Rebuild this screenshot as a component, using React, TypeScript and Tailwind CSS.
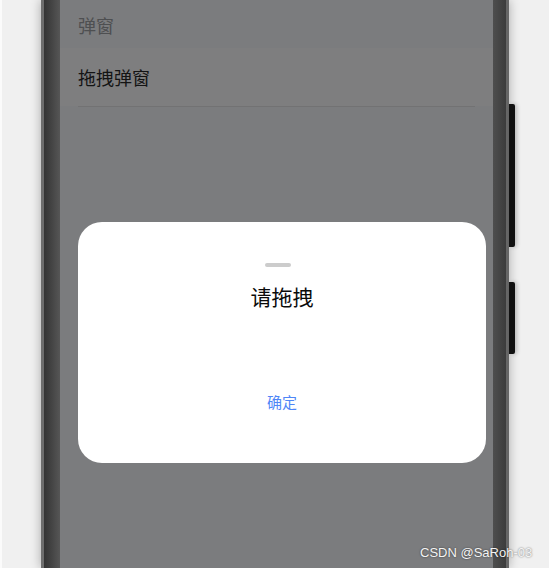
export default function App() {
  return (
    <div
      className="relative flex h-[568px] w-[549px] overflow-hidden bg-[#f0f0f0]"
      style={{ fontFamily: '"Noto Sans CJK SC", "Noto Sans", sans-serif' }}
    >
      <div className="w-[2px] shrink-0 bg-[#fbfbfb]" />
      {/* phone frame */}
      <div className="relative ml-[39px] flex h-full w-[468px] shrink-0 shadow-[0_0_10px_rgba(0,0,0,0.3)]">
        <div className="h-full w-[3px] bg-[#6e6e6e]" />
        <div className="h-full w-[16px] bg-gradient-to-r from-[#343434] to-[#565656]" />
        {/* screen */}
        <div className="relative flex h-full w-[433px] flex-col bg-[#7b7c7e]">
          <div className="flex h-[48px] items-center px-[18px] pt-[2px] text-[18px] text-[#4e4f51]">弹窗</div>
          <div className="flex h-[58px] items-center bg-[#7e7e7f] px-[18px] text-[18px] text-[#141414]">拖拽弹窗</div>
          <div className="mx-[18px] h-px bg-[#727273]" />
          {/* dialog */}
          <div className="absolute left-[18px] top-[222px] flex h-[241px] w-[408px] flex-col items-center rounded-[24px] bg-white">
            <div className="mt-[41px] h-[4px] w-[26px] -translate-x-[4px] rounded-full bg-[#cccccc]" />
            <div className="mt-[15px] text-[21px] leading-[29px] text-[#0a0a0a]">请拖拽</div>
            <div className="mt-[80px] text-[15px] text-[#4f86f7]">确定</div>
          </div>
        </div>
        <div className="h-full w-[13px] bg-gradient-to-r from-[#4e4e4e] to-[#3c3c3c]" />
        <div className="h-full w-[3px] bg-[#666]" />
        {/* side buttons */}
        <div className="absolute right-[-6px] top-[104px] h-[143px] w-[6px] rounded-r-[2px] bg-[#111] shadow-[2px_0_4px_rgba(0,0,0,0.2)]" />
        <div className="absolute right-[-6px] top-[282px] h-[72px] w-[6px] rounded-r-[2px] bg-[#111] shadow-[2px_0_4px_rgba(0,0,0,0.2)]" />
      </div>
      <div
        className="absolute bottom-[6px] left-[420px] text-[13px] text-[#f4f4f4] [text-shadow:0_0_2px_rgba(0,0,0,0.6)]"
        style={{ fontFamily: '"Liberation Sans", Arial, sans-serif' }}
      >
        CSDN @SaRoh-03
      </div>
    </div>
  )
}
